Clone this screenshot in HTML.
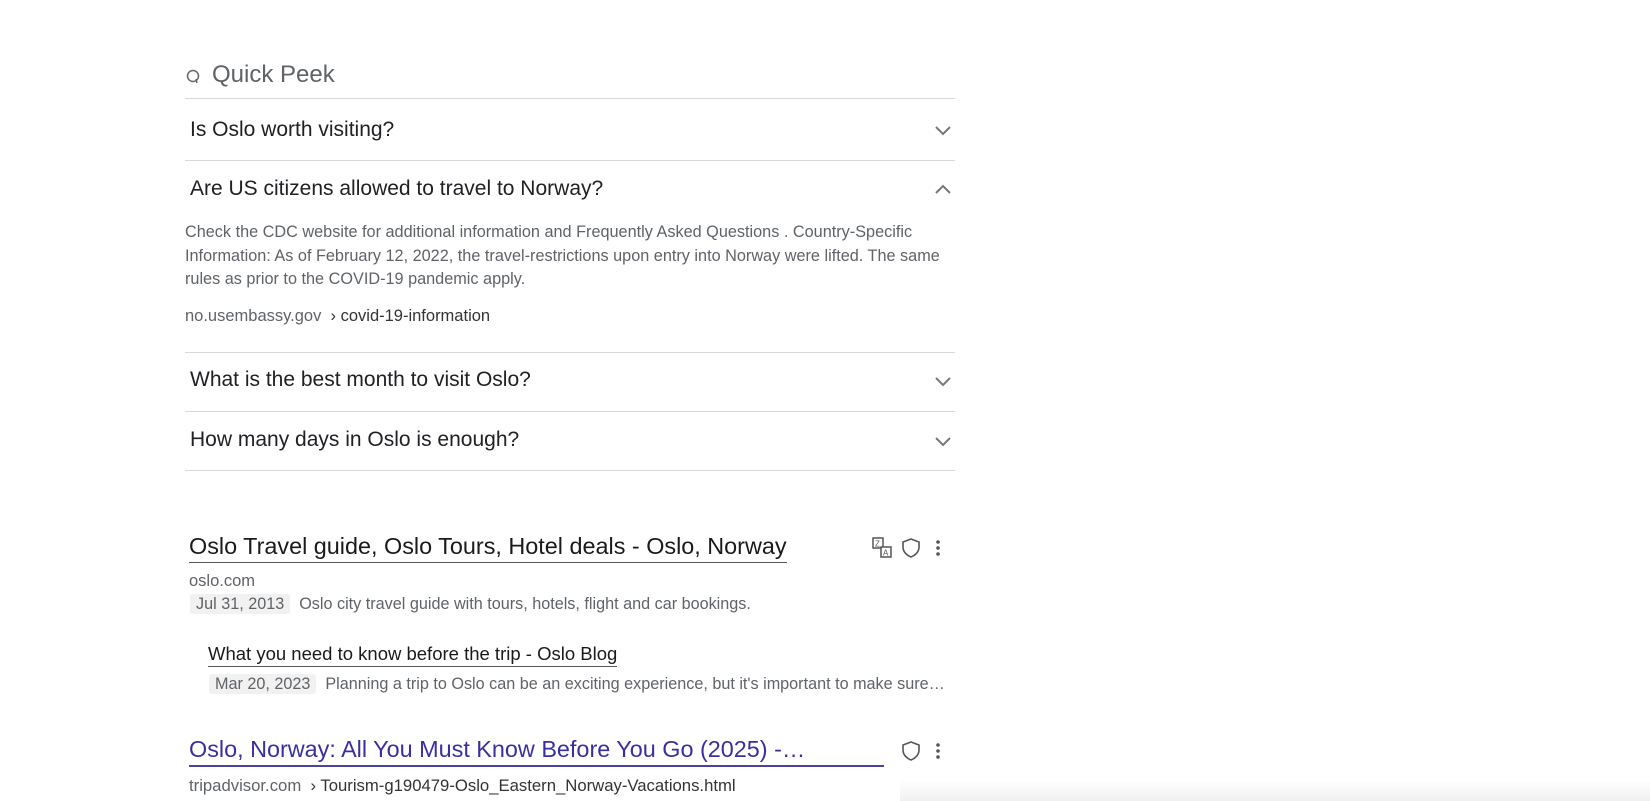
<!DOCTYPE html>
<html><head><meta charset="utf-8"><style>
body{margin:0;width:1650px;height:801px;background:#fff;font-family:"Liberation Sans",sans-serif;position:relative;overflow:hidden}
.a{position:absolute;white-space:nowrap}
.hr{position:absolute;left:185px;width:770px;height:1px;background:#d8d8d8}
.q{font-size:21px;color:#202124;left:190px}
.chev{position:absolute;left:934px}
.sn{font-size:16.25px;color:#5f6368}
.d{background:#f1f1f1;padding:1px 6px;border-radius:3px;color:#5f6368}
</style></head><body>
<svg class="a" style="left:186px;top:69px" width="16" height="16" viewBox="0 0 16 16"><circle cx="7" cy="7" r="5.5" fill="none" stroke="#666" stroke-width="1.5"/><path d="M10 10 l1 4" stroke="#666" stroke-width="1.5"/></svg>
<div class="a" style="left:212px;top:61px;font-size:24px;color:#5f6368">Quick Peek</div>
<div class="hr" style="top:98px"></div>
<div class="a q" style="top:118px">Is Oslo worth visiting?</div>
<svg class="chev" style="top:124px" width="18" height="12"><path d="M2 3 l7 7 l7 -7" fill="none" stroke="#777" stroke-width="2"/></svg>
<div class="hr" style="top:160px"></div>
<div class="a q" style="top:177px">Are US citizens allowed to travel to Norway?</div>
<svg class="chev" style="top:183px" width="18" height="12"><path d="M2 10 l7 -7 l7 7" fill="none" stroke="#777" stroke-width="2"/></svg>
<div class="a sn" style="left:185px;top:221px;line-height:23.6px">Check the CDC website for additional information and Frequently Asked Questions . Country-Specific<br>Information: As of February 12, 2022, the travel-restrictions upon entry into Norway were lifted. The same<br>rules as prior to the COVID-19 pandemic apply.</div>
<div class="a" style="left:185px;top:307px;font-size:16.5px;color:#5f6368">no.usembassy.gov <span style="color:#333">&nbsp;› covid-19-information</span></div>
<div class="hr" style="top:352px"></div>
<div class="a q" style="top:368px">What is the best month to visit Oslo?</div>
<svg class="chev" style="top:375px" width="18" height="12"><path d="M2 3 l7 7 l7 -7" fill="none" stroke="#777" stroke-width="2"/></svg>
<div class="hr" style="top:411px"></div>
<div class="a q" style="top:428px">How many days in Oslo is enough?</div>
<svg class="chev" style="top:435px" width="18" height="12"><path d="M2 3 l7 7 l7 -7" fill="none" stroke="#777" stroke-width="2"/></svg>
<div class="hr" style="top:470px"></div>

<div class="a" style="left:189px;top:533px;font-size:23.4px;color:#1a1a1a;border-bottom:1px solid #555;padding-bottom:2px">Oslo Travel guide, Oslo Tours, Hotel deals - Oslo, Norway</div>
<svg class="a" style="left:872px;top:537px" width="22" height="22" viewBox="0 0 22 22"><rect x="1" y="1" width="10" height="10" fill="none" stroke="#555" stroke-width="1.5"/><text x="3" y="9.5" font-size="8" fill="#555" font-family="Liberation Sans">Z</text><rect x="9" y="10" width="10" height="10" fill="#fff" stroke="#555" stroke-width="1.5"/><text x="11" y="18.5" font-size="8" fill="#555" font-family="Liberation Sans">A</text></svg>
<svg class="a" style="left:900px;top:537px" width="22" height="22" viewBox="0 0 22 22"><path d="M11 2 L19 5 V10 C19 15 15 18.5 11 20 C7 18.5 3 15 3 10 V5 Z" fill="none" stroke="#555" stroke-width="1.6"/></svg>
<svg class="a" style="left:933px;top:538px" width="10" height="20"><circle cx="5" cy="4" r="1.8" fill="#555"/><circle cx="5" cy="10" r="1.8" fill="#555"/><circle cx="5" cy="16" r="1.8" fill="#555"/></svg>
<div class="a" style="left:189px;top:572px;font-size:16.5px;color:#5f6368">oslo.com</div>
<div class="a" style="left:190px;top:595px;font-size:16.2px;color:#5f6368"><span class="d">Jul 31, 2013</span>&nbsp; Oslo city travel guide with tours, hotels, flight and car bookings.</div>
<div class="a" style="left:208px;top:643px;font-size:18.5px;color:#1a1a1a;border-bottom:1px solid #555;padding-bottom:1px">What you need to know before the trip - Oslo Blog</div>
<div class="a" style="left:209px;top:675px;font-size:16.2px;color:#5f6368"><span class="d">Mar 20, 2023</span>&nbsp; Planning a trip to Oslo can be an exciting experience, but it's important to make sure…</div>
<div class="a" style="left:189px;top:736px;font-size:23.4px;color:#3b2f9e;border-bottom:2px solid #4a43a0;padding-bottom:2px;width:695px">Oslo, Norway: All You Must Know Before You Go (2025) -…</div>
<svg class="a" style="left:900px;top:740px" width="22" height="22" viewBox="0 0 22 22"><path d="M11 2 L19 5 V10 C19 15 15 18.5 11 20 C7 18.5 3 15 3 10 V5 Z" fill="none" stroke="#555" stroke-width="1.6"/></svg>
<svg class="a" style="left:933px;top:741px" width="10" height="20"><circle cx="5" cy="4" r="1.8" fill="#555"/><circle cx="5" cy="10" r="1.8" fill="#555"/><circle cx="5" cy="16" r="1.8" fill="#555"/></svg>
<div class="a" style="left:189px;top:776px;font-size:16.7px;color:#5f6368">tripadvisor.com <span style="color:#333">&nbsp;› Tourism-g190479-Oslo_Eastern_Norway-Vacations.html</span></div>
<div class="a" style="left:900px;top:780px;width:750px;height:21px;background:linear-gradient(#fff,#f0f0f0)"></div>
</body></html>
